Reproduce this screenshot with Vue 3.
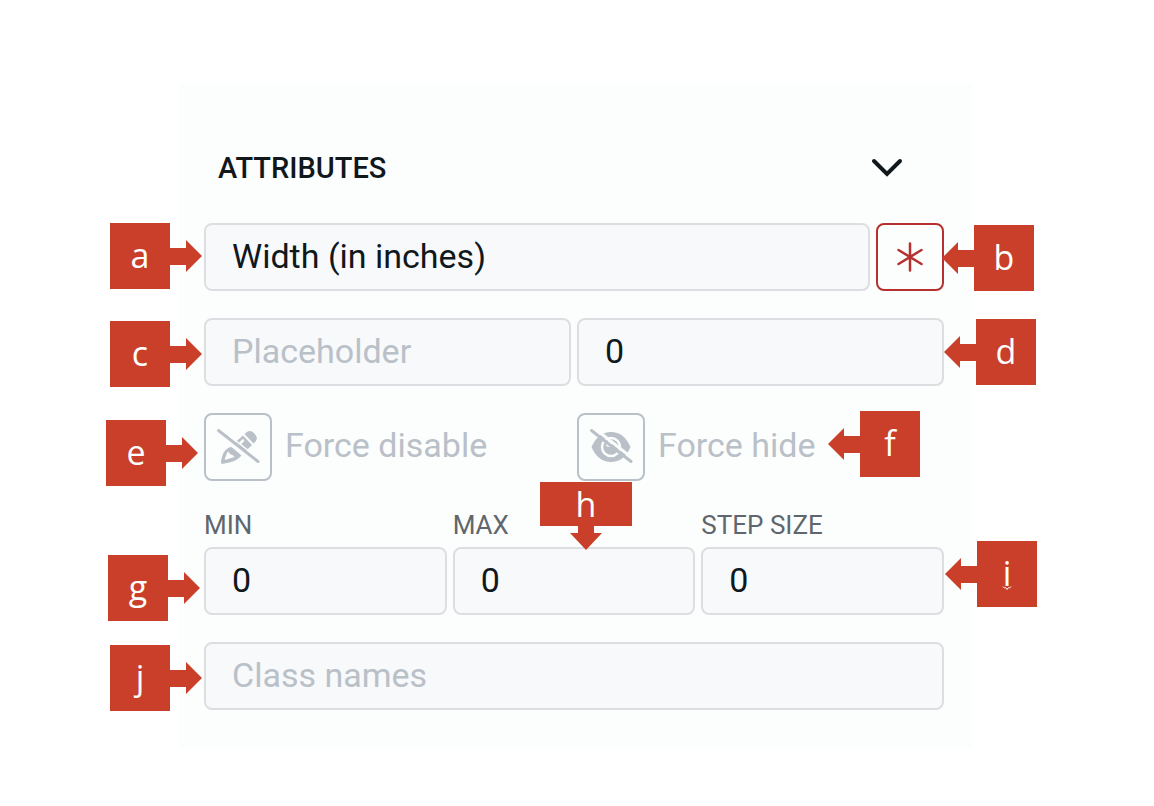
<script setup>
import { ref } from 'vue'

const label = ref('Width (in inches)')
const placeholder = ref('')
const defaultValue = ref('0')
const classNames = ref('')
const range = ref([
  { id: 'min', name: 'MIN', value: '0' },
  { id: 'max', name: 'MAX', value: '0' },
  { id: 'step', name: 'STEP SIZE', value: '0' },
])

const callouts = [
  { letter: 'a', dir: 'right' },
  { letter: 'b', dir: 'left' },
  { letter: 'c', dir: 'right' },
  { letter: 'd', dir: 'left' },
  { letter: 'e', dir: 'right' },
  { letter: 'f', dir: 'left' },
  { letter: 'g', dir: 'right' },
  { letter: 'h', dir: 'down' },
  { letter: 'i', dir: 'left' },
  { letter: 'j', dir: 'right' },
]
const shapes = {
  right: { box: '0 0 92 66', points: '0,0 60,0 60,25 76,25 76,17 92,33 76,49 76,42 60,42 60,66 0,66' },
  left: { box: '0 0 92 66', points: '92,0 32,0 32,25 16,25 16,17 0,33 16,49 16,42 32,42 32,66 92,66' },
  down: { box: '0 0 92 68', points: '0,0 92,0 92,44 54,44 54,51 62,51 46,68 30,51 38,51 38,44 0,44' },
}
</script>

<template>
  <main class="page">
    <section class="panel">
      <header class="heading">
        <h2>ATTRIBUTES</h2>
        <button class="toggle" type="button" aria-label="Collapse attributes">
          <svg width="32" height="20" viewBox="0 0 32 20">
            <path d="M3 3 L16 16 L29 3" fill="none" stroke="#10181c" stroke-width="4" stroke-linecap="round" stroke-linejoin="miter" />
          </svg>
        </button>
      </header>

      <div class="row">
        <input v-model="label" class="field grow" type="text" aria-label="Label" />
        <button class="square required" type="button" aria-label="Required">
          <svg width="30" height="32" viewBox="0 0 30 32">
            <path d="M15 2.5V29.500M3.500 9L26.500 23M26.500 9L3.500 23" fill="none" stroke="#b5302e" stroke-width="2.500" stroke-linecap="round" />
          </svg>
        </button>
      </div>

      <div class="row halves">
        <input v-model="placeholder" class="field" type="text" placeholder="Placeholder" aria-label="Placeholder" />
        <input v-model="defaultValue" class="field" type="text" aria-label="Default value" />
      </div>

      <div class="row halves">
        <button class="option" type="button">
          <span class="square">
            <svg width="44" height="40" viewBox="12 14 44 40">
              <g fill="#b9c0c8">
                <path d="M40.500 21 L43 19 Q46.500 16.500 50.500 20.500 Q54.500 25 51.500 28.500 L49.500 30.500Z" />
                <path d="M39 22.500 L48 32 L41.500 38.500 L31.500 29Z" />
                <path d="M27.500 34 L37.500 42.500 Q33 48 25 49.500 L18 51 Q16.500 50.500 17 48 Q18.500 38 25 34.500Z" />
              </g>
              <path d="M36.500 30 L39 27.500" fill="none" stroke="#fcfefd" stroke-width="2.500" stroke-linecap="round" />
              <path d="M21.500 46 L24 39.500 L26 42 L29.500 43.500Z" fill="#fcfefd" stroke="#fcfefd" stroke-width="1.500" stroke-linejoin="round" />
              <path d="M16.500 16 L56.500 47" stroke="#fcfefd" stroke-width="1.500" />
              <path d="M14.500 17.500 L54 48.500" stroke="#b9c0c8" stroke-width="3" stroke-linecap="round" />
            </svg>
          </span>
          <span class="option-text">Force disable</span>
        </button>
        <button class="option" type="button">
          <span class="square">
            <svg width="44" height="40" viewBox="12 14 44 40">
              <path d="M14.500 34 Q21 19 34 19 Q47 19 53.500 34 Q47 49 34 49 Q21 49 14.500 34Z" fill="#b9c0c8" />
              <circle cx="34" cy="34" r="9" fill="none" stroke="#fcfefd" stroke-width="2.500" />
              <circle cx="32" cy="31" r="3" fill="#fcfefd" />
              <path d="M16.500 14.500 L57 46.500" stroke="#fcfefd" stroke-width="3" />
              <path d="M14.500 17.500 L54 48.500" stroke="#b9c0c8" stroke-width="3" stroke-linecap="round" />
            </svg>
          </span>
          <span class="option-text">Force hide</span>
        </button>
      </div>

      <div class="row thirds">
        <div v-for="item in range" :key="item.id" class="labelled">
          <label :for="item.id">{{ item.name }}</label>
          <input :id="item.id" v-model="item.value" class="field" type="text" inputmode="numeric" />
        </div>
      </div>

      <div class="row">
        <input v-model="classNames" class="field grow" type="text" placeholder="Class names" aria-label="Class names" />
      </div>

      <div v-for="c in callouts" :key="c.letter" class="callout" :class="[c.dir, 'at-' + c.letter]">
        <svg class="shape" :viewBox="shapes[c.dir].box" aria-hidden="true">
          <polygon :points="shapes[c.dir].points" fill="#c93f2a" />
        </svg>
        <span class="letter">{{ c.letter }}</span>
        <svg v-if="c.letter === 'i'" class="squiggle" width="10" height="6" viewBox="0 0 10 6" aria-hidden="true">
          <path d="M1 1.500 L2.500 3 L3.500 2.500 L5 4.500 L6.500 2.500 L7.500 3 L9 1.500" fill="none" stroke="#fff" stroke-width="1" />
        </svg>
      </div>
    </section>
  </main>
</template>

<style>
body {
  margin: 0;
  background: #fff;
}
</style>

<style scoped>
* {
  box-sizing: border-box;
}
.page {
  padding: 83px 182px 57px 179px;
  font-family: Roboto, "Liberation Sans", sans-serif;
}
.panel {
  position: relative;
  display: flex;
  flex-direction: column;
  gap: 27px;
  padding: 61px 28px 39px 25px;
  background: #fcfefd;
}
.heading {
  display: flex;
  align-items: center;
  justify-content: space-between;
  height: 52px;
  padding: 0 41px 4px 14px;
}
h2 {
  margin: 0;
  font-size: 29px;
  font-weight: 500;
  line-height: 48px;
  color: #10181c;
}
button {
  padding: 0;
  border: 0;
  background: none;
  font: inherit;
  cursor: pointer;
}
.toggle {
  display: flex;
}
.row {
  display: flex;
  gap: 6px;
}
.halves {
  display: grid;
  grid-template-columns: 1fr 1fr;
}
.thirds {
  display: grid;
  grid-template-columns: 1fr 1fr 1fr;
}
.field {
  width: 100%;
  min-width: 0;
  height: 68px;
  padding: 0 26px 2px;
  border: 2px solid #dcdee2;
  border-radius: 8px;
  background: #f8f9fb;
  color: #10181c;
  font-family: inherit;
  font-size: 34px;
  outline: none;
}
.field::placeholder {
  color: #b9c0c8;
  opacity: 1;
}
.grow {
  flex: 1;
}
.square {
  display: flex;
  flex: none;
  align-items: center;
  justify-content: center;
  width: 68px;
  height: 68px;
  border: 2px solid #b9c0c8;
  border-radius: 8px;
}
.required {
  border-color: #b5302e;
}
.option {
  display: flex;
  align-items: center;
  gap: 13px;
  color: #b9c0c8;
  font-size: 34px;
  text-align: left;
}
.option-text {
  padding-bottom: 4px;
}
.labelled {
  display: flex;
  flex-direction: column;
  gap: 5px;
}
label {
  font-size: 26px;
  line-height: 34px;
  color: #5f666d;
}
.callout {
  position: absolute;
  width: 92px;
  height: 66px;
  color: #fff;
  font-family: "Open Sans", "Noto Sans", sans-serif;
  font-size: 34px;
  font-weight: 500;
  line-height: 64px;
  text-align: center;
}
.callout.down {
  height: 68px;
  line-height: 44px;
}
.shape {
  position: absolute;
  inset: 0;
  width: 100%;
  height: 100%;
}
.letter {
  position: relative;
  display: block;
}
.right .letter {
  margin-right: 32px;
}
.left .letter {
  margin-left: 32px;
}
.squiggle {
  position: absolute;
  left: 57px;
  top: 44px;
}
.at-a { left: -69px; top: 140px; }
.at-b { right: -62px; top: 142px; }
.at-c { left: -69px; top: 238px; }
.at-d { right: -64px; top: 236px; }
.at-e { left: -73px; top: 337px; }
.at-f { left: 649px; top: 328px; }
.at-g { left: -71px; top: 472px; }
.at-h { left: 361px; top: 399px; }
.at-i { right: -65px; top: 458px; }
.at-j { left: -69px; top: 562px; }
</style>
